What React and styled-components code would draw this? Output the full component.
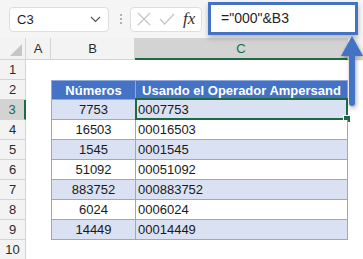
import React from "react";
import styled, { createGlobalStyle } from "styled-components";

const Global = createGlobalStyle`
  html, body { margin: 0; padding: 0; background: #ffffff; }
  body { font-family: "Liberation Sans", Arial, sans-serif; }
  * { box-sizing: border-box; }
`;

const Page = styled.div`
  position: relative;
  width: 363px;
  height: 259px;
  overflow: hidden;
  background: #ffffff;
`;

const Toolbar = styled.div`
  display: flex;
  align-items: center;
  height: 38px;
  background: #f5f5f5;
  padding: 0 0 0 9px;
`;

const NameBox = styled.div`
  display: flex;
  align-items: center;
  justify-content: space-between;
  width: 100px;
  height: 25px;
  background: #ffffff;
  border: 1px solid #dedede;
  border-radius: 4px;
  padding: 0 7px 0 7px;
  font-size: 13px;
  color: #1f1f1f;
`;

const Grip = styled.div`
  display: flex;
  flex-direction: column;
  gap: 2px;
  margin: 0 8px 0 11px;
  span {
    width: 2px;
    height: 2px;
    background: #9a9a9a;
    border-radius: 1px;
  }
`;

const FxBox = styled.div`
  display: flex;
  align-items: center;
  gap: 8px;
  width: 72px;
  height: 25px;
  background: #ffffff;
  border: 1px solid #dedede;
  border-radius: 4px;
  padding: 0 3px 0 6px;
`;

const FxText = styled.span`
  font-family: "Liberation Serif", "Times New Roman", serif;
  font-style: italic;
  font-size: 17px;
  color: #333;
`;

const FormulaBox = styled.div`
  display: flex;
  align-items: center;
  margin-left: 6px;
  width: 150px;
  height: 33px;
  margin-top: -2px;
  background: #ffffff;
  border: 3px solid #4472c4;
  box-shadow: 0 3px 5px rgba(0, 0, 0, 0.25);
  padding-left: 10px;
  font-size: 14px;
  color: #1f1f1f;
  position: relative;
  z-index: 2;
`;

const Sheet = styled.div`
  display: flex;
  flex-direction: column;
`;

const Row = styled.div`
  display: grid;
  grid-template-columns: 26px 25px 84px 213px 1fr;
  height: ${(p) => p.$h || 20}px;
`;

const Corner = styled.div`
  position: relative;
  background: #f3f3f3;
  border-right: 1px solid #d4d4d4;
  border-bottom: 1px solid #d4d4d4;
  &::after {
    content: "";
    position: absolute;
    right: 3px;
    bottom: 3px;
    width: 0;
    height: 0;
    border-left: 12px solid transparent;
    border-bottom: 12px solid #c6c6c6;
  }
`;

const ColHead = styled.div`
  display: flex;
  align-items: center;
  justify-content: center;
  background: ${(p) => (p.$active ? "#d3d3d3" : "#f3f3f3")};
  color: ${(p) => (p.$active ? "#1e6b41" : "#2b2b2b")};
  border-right: 1px solid ${(p) => (p.$last ? "transparent" : "#d4d4d4")};
  border-bottom: ${(p) => (p.$active ? "2px solid #1e6b41" : "1px solid #d4d4d4")};
  font-size: 13px;
`;

const RowHead = styled.div`
  display: flex;
  align-items: center;
  justify-content: center;
  background: ${(p) => (p.$active ? "#d3d3d3" : "#f3f3f3")};
  color: ${(p) => (p.$active ? "#1e6b41" : "#2b2b2b")};
  border-right: ${(p) => (p.$active ? "2px solid #1e6b41" : "1px solid #d4d4d4")};
  border-bottom: 1px solid #d4d4d4;
  font-size: 13px;
`;

const Blank = styled.div`
  background: #ffffff;
`;

const Cell = styled.div`
  display: flex;
  align-items: center;
  justify-content: ${(p) => (p.$center ? "center" : "flex-start")};
  padding-left: ${(p) => (p.$center ? 0 : 2)}px;
  background: ${(p) => (p.$head ? "#4472c4" : p.$band ? "#d9e1f2" : "#ffffff")};
  color: ${(p) => (p.$head ? "#ffffff" : "#1a1a1a")};
  font-weight: ${(p) => (p.$head ? 700 : 400)};
  font-size: 13px;
  border-left: 1px solid #8ea9db;
  border-right: ${(p) => (p.$right ? "1px solid #8ea9db" : "none")};
  border-bottom: 1px solid #8ea9db;
  border-top: ${(p) => (p.$head ? "1px solid #8ea9db" : "none")};
  position: relative;
  white-space: nowrap;
`;

const ActiveFrame = styled.div`
  position: absolute;
  left: -1px;
  top: -2px;
  right: -1px;
  bottom: -1px;
  border: 2px solid #1e6b41;
  pointer-events: none;
  &::after {
    content: "";
    position: absolute;
    right: -5px;
    bottom: -5px;
    width: 6px;
    height: 6px;
    background: #1e6b41;
    border: 1px solid #ffffff;
  }
`;

const Arrow = styled.svg`
  position: absolute;
  left: 340px;
  top: 35px;
  z-index: 3;
  overflow: visible;
  filter: drop-shadow(1px 2px 2px rgba(0, 0, 0, 0.35));
`;

const data = [
  ["7753", "0007753"],
  ["16503", "00016503"],
  ["1545", "0001545"],
  ["51092", "00051092"],
  ["883752", "000883752"],
  ["6024", "0006024"],
  ["14449", "00014449"],
];

export default function App() {
  return (
    <Page>
      <Global />
      <Toolbar>
        <NameBox>
          <span>C3</span>
          <svg width="11" height="7" viewBox="0 0 11 7">
            <path d="M1 1 L5.5 5.5 L10 1" fill="none" stroke="#555" strokeWidth="1.2" />
          </svg>
        </NameBox>
        <Grip>
          <span />
          <span />
          <span />
        </Grip>
        <FxBox>
          <svg width="14" height="14" viewBox="0 0 14 14">
            <path d="M1 1 L13 13 M13 1 L1 13" stroke="#c4c4c4" strokeWidth="1.2" fill="none" />
          </svg>
          <svg width="16" height="12" viewBox="0 0 16 12">
            <path d="M1 6 L5.5 11 L15 1" stroke="#c4c4c4" strokeWidth="1.2" fill="none" />
          </svg>
          <FxText>fx</FxText>
        </FxBox>
        <FormulaBox>="000"&amp;B3</FormulaBox>
      </Toolbar>
      <Sheet>
        <Row $h={22}>
          <Corner />
          <ColHead>A</ColHead>
          <ColHead>B</ColHead>
          <ColHead $active>C</ColHead>
          <ColHead $last />
        </Row>
        <Row>
          <RowHead>1</RowHead>
          <Blank />
          <Blank />
          <Blank />
          <Blank />
        </Row>
        <Row>
          <RowHead>2</RowHead>
          <Blank />
          <Cell $head $center>Números</Cell>
          <Cell $head $center $right>Usando el Operador Ampersand</Cell>
          <Blank />
        </Row>
        {data.map(([b, c], i) => (
          <Row key={i}>
            <RowHead $active={i === 0}>{i + 3}</RowHead>
            <Blank />
            <Cell $center $band={i % 2 === 0}>{b}</Cell>
            <Cell $right $band={i % 2 === 0}>
              {c}
              {i === 0 && <ActiveFrame />}
            </Cell>
            <Blank />
          </Row>
        ))}
        <Row>
          <RowHead>10</RowHead>
          <Blank />
          <Blank />
          <Blank />
          <Blank />
        </Row>
      </Sheet>
      <Arrow width="24" height="72" viewBox="0 0 24 72">
        <path
          d="M12 1 L23 21 L15 21 L15 68 Q15 71 12 71 Q9 71 9 68 L9 21 L1 21 Z"
          fill="#4472c4"
        />
      </Arrow>
    </Page>
  );
}
